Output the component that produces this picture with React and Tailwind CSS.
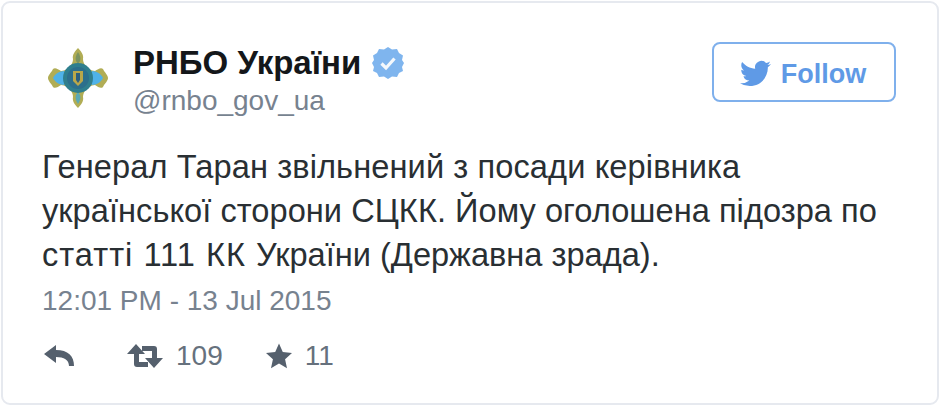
const font = { fontFamily: '"Liberation Sans", Arial, sans-serif' }

function Logo() {
  return (
    <svg viewBox="0 0 62 62" className="w-[62px] h-[62px] shrink-0 blur-[0.7px]">
      <path d="M31 1 C34 4 37 8 36 12 C36 17 40 23 48 24 C51 22 54 20 56 22 C58 26 61 28 61 31 C61 34 58 36 56 40 C54 42 51 40 48 38 C40 39 36 45 36 50 C37 54 34 58 31 61 C28 58 25 54 26 50 C26 45 22 39 14 38 C11 40 8 42 6 40 C4 36 1 34 1 31 C1 28 4 26 6 22 C8 20 11 22 14 24 C22 23 26 17 26 12 C25 8 28 4 31 1 Z" fill="#b1ad55" />
      <path d="M31 5 C33 8 34 11 33 14 L31 17 L29 14 C28 11 29 8 31 5 Z" fill="#7c9460" />
      <path d="M31 57 C33 54 34 51 33 48 L31 45 L29 48 C28 51 29 54 31 57 Z" fill="#5aa9b5" />
      <path d="M6 31 C8 27 12 24 17 24 L22 31 L17 38 C12 38 8 35 6 31 Z" fill="#4fb2e8" />
      <path d="M56 31 C54 27 50 24 45 24 L40 31 L45 38 C50 38 54 35 56 31 Z" fill="#4fb2e8" />
      <circle cx="31" cy="31" r="15" fill="#2f7f8e" />
      <circle cx="31" cy="31" r="11" fill="#2c6f8c" />
      <path d="M26 24 H36 V34 L31 39 L26 34 Z" fill="#b9a74a" />
      <path d="M29 26 H33 V33 L31 36 L29 33 Z" fill="#2c5f80" />
    </svg>
  )
}

function Verified() {
  return (
    <svg viewBox="0 0 32 32" className="w-8 h-8 shrink-0">
      <path d="M16 0 L20 2.500 L25 2 L27 6 L31 8.500 L30 13 L32 16 L30 20 L31 24 L27 26 L25 30 L20 29.500 L16 32 L12 29.500 L7 30 L5 26 L1 24 L2 20 L0 16 L2 13 L1 8.500 L5 6 L7 2 L12 2.500 Z" fill="#7fb5ee" />
      <path d="M9.500 16.500 L14 21 L22.500 11.500" fill="none" stroke="#f4f8fc" strokeWidth="3.200" />
    </svg>
  )
}

function Bird({ className }) {
  return (
    <svg viewBox="0 0 24 24" className={className} fill="currentColor">
      <path d="M23.953 4.57a10 10 0 01-2.825.775 4.958 4.958 0 002.163-2.723c-.951.555-2.005.959-3.127 1.184a4.92 4.92 0 00-8.384 4.482C7.69 8.095 4.067 6.13 1.64 3.162a4.822 4.822 0 00-.666 2.475c0 1.71.87 3.213 2.188 4.096a4.904 4.904 0 01-2.228-.616v.06a4.923 4.923 0 003.946 4.827 4.996 4.996 0 01-2.212.085 4.936 4.936 0 004.604 3.417 9.867 9.867 0 01-6.102 2.105c-.39 0-.779-.023-1.17-.067a13.995 13.995 0 007.557 2.209c9.053 0 13.998-7.496 13.998-13.985 0-.21 0-.42-.015-.63A9.935 9.935 0 0024 4.59z" />
    </svg>
  )
}

function Reply() {
  return (
    <svg viewBox="0 0 30 22" className="w-[30px] h-[22px]" fill="#55606d">
      <path d="M0 9 L12 0 L12 5 C24 5 30 11 30 21 L25 21 C25 15 20 12 12 12 L12 18 Z" />
    </svg>
  )
}

function Retweet() {
  return (
    <svg viewBox="0 0 36 24" className="w-9 h-6" fill="#55606d">
      <path d="M9 0 L18 10 L12 10 L12 18 L21 18 L21 23 L10 23 C8 23 7 22 7 20 L7 10 L0 10 Z" />
      <path d="M27 24 L36 14 L30 14 L30 5 C30 3 29 2 27 2 L15 2 L15 7 L25 7 L25 14 L18 14 Z" />
    </svg>
  )
}

function Star() {
  return (
    <svg viewBox="0 0 24 24" className="w-[26px] h-[26px]" fill="#55606d">
      <path d="M12 0.500 L15.500 8.300 L24 9.200 L17.600 14.900 L19.400 23.300 L12 19 L4.600 23.300 L6.400 14.900 L0 9.200 L8.500 8.300 Z" />
    </svg>
  )
}

export default function App() {
  return (
    <div className="w-[944px] h-[408px] bg-white p-[1px] pr-[5px] pb-[3px]" style={font}>
      <div className="h-full bg-white border-2 border-[#e6e9ef] rounded-[9px] pl-[39px] pr-[41px] pt-[38px]">
        <div className="flex items-start justify-between">
          <div className="flex pl-[5px] pt-[6px]">
            <Logo />
            <div className="ml-[24px] -mt-[6px]">
              <div className="flex items-center gap-[11px]">
                <span className="text-[33px] leading-[44px] font-bold text-[#14171a]">РНБО України</span>
                <Verified />
              </div>
              <div className="text-[28px] leading-[32px] text-[#77828f]">@rnbo_gov_ua</div>
            </div>
          </div>
          <button className="w-[184px] h-[60px] mt-[1px] pt-[5px] flex items-center justify-center gap-[10px] border-2 border-[#7fb0ec] rounded-[8px] text-[#5f9ae6] text-[27px] font-bold">
            <Bird className="w-[31px] h-[31px] -ml-[2px] -mt-[2px]" />
            Follow
          </button>
        </div>
        <p className="mt-[28px] text-[32.600px] leading-[44.200px] text-[#292f33] whitespace-nowrap">
          <span className="tracking-[0.1px]">Генерал Таран звільнений з посади керівника</span><br />
          <span className="tracking-[0.04px]">української сторони СЦКК. Йому оголошена підозра по</span><br />
          <span className="tracking-[1px]">статті 111 КК </span>України (Державна зрада).
        </p>
        <div className="mt-[6px] text-[28px] leading-[34px] text-[#77828f]">12:01 PM - 13 Jul 2015</div>
        <div className="mt-[22px] flex items-center text-[28px] leading-[32px] text-[#66717d]">
          <span className="ml-[2px]"><Reply /></span>
          <span className="ml-[53px] flex items-center gap-[13px]"><Retweet />109</span>
          <span className="ml-[43px] flex items-center gap-[13px]"><Star />11</span>
        </div>
      </div>
    </div>
  )
}
